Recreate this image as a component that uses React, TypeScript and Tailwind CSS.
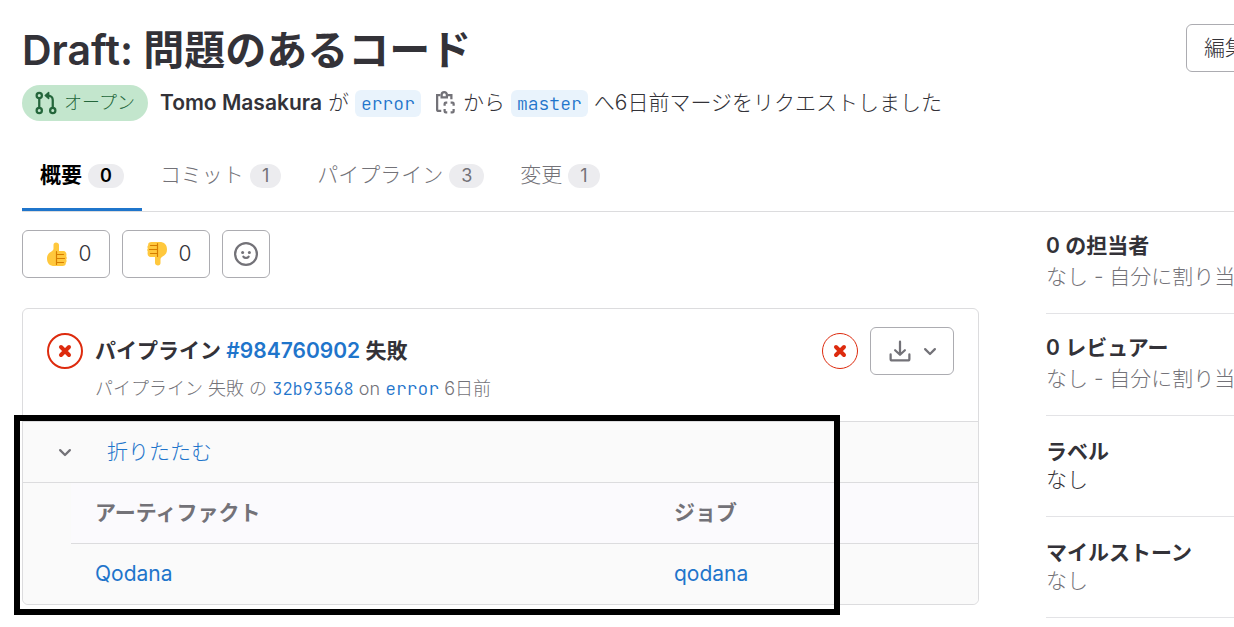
import type {ReactNode} from "react"

const Chevron = () => (
  <svg width="24" height="24" viewBox="0 0 16 16" fill="none" stroke="currentColor" strokeWidth="1.5" strokeLinecap="round" strokeLinejoin="round" aria-hidden="true">
    <path d="M4.75 6.75 8 10l3.25-3.25" />
  </svg>
)

const MergeIcon = () => (
  <svg width="24" height="24" viewBox="0 0 16 16" fill="none" stroke="currentColor" strokeWidth="1.5" aria-hidden="true">
    <circle cx="3.5" cy="3" r="1.75" />
    <circle cx="3.5" cy="13" r="1.75" />
    <circle cx="12.5" cy="13" r="1.75" />
    <path d="M3.5 4.75v6.5M12.5 11.25V6a3 3 0 0 0-3-3H8.5" />
    <path d="M9.75 1 7.5 3l2.25 2z" fill="currentColor" strokeLinejoin="round" strokeWidth="1" />
  </svg>
)

const CopyIcon = () => (
  <svg width="24" height="24" viewBox="0 0 16 16" fill="none" stroke="currentColor" strokeWidth="1.5" aria-hidden="true">
    <path d="M5 2.75H2.75v9.500a1 1 0 0 0 1 1H5.500M10 2.75h2.25V5.500" />
    <path d="M5.75 4.25V2.500a1.75 1.75 0 0 1 3.500 0v1.75z" />
    <path d="M7.750 9.750V8.500q0-.75.75-.75H9.500M11.750 7.750h1.250q.75 0 .75.75V9.750M13.750 12v1.500q0 .75-.75.75h-1.250M9.500 14.250H8.500q-.75 0-.75-.75V12" />
  </svg>
)

const SmileyIcon = () => (
  <svg width="24" height="24" viewBox="0 0 16 16" fill="none" stroke="currentColor" strokeWidth="1.5" strokeLinecap="round" aria-hidden="true">
    <circle cx="8" cy="8" r="7.25" />
    <circle cx="5.75" cy="7" r="1" fill="currentColor" stroke="none" />
    <circle cx="10.25" cy="7" r="1" fill="currentColor" stroke="none" />
    <path d="M6.25 9.75c.8 1.2 2.7 1.2 3.5 0" />
  </svg>
)

const DownloadIcon = () => (
  <svg width="24" height="24" viewBox="0 0 16 16" fill="none" stroke="currentColor" strokeWidth="1.5" strokeLinecap="round" strokeLinejoin="round" aria-hidden="true">
    <path d="M8 1.75v8.5M4.75 7.5 8 10.5l3.25-3M1.75 10.25v3c0 .55.45 1 1 1h10.5c.55 0 1-.45 1-1v-3" />
  </svg>
)

const FailedIcon = ({border}: {border: string}) => (
  <span className={`flex size-9 shrink-0 items-center justify-center rounded-full text-[#dd2b0e] ${border}`}>
    <svg width="14" height="14" viewBox="0 0 14 14" fill="none" stroke="currentColor" strokeWidth="4" strokeLinecap="round" aria-label="失敗">
      <path d="m3 3 8 8M11 3l-8 8" />
    </svg>
  </span>
)

const Thumb = ({down = false}: {down?: boolean}) => (
  <svg width="24" height="24" viewBox="0 0 24 24" aria-hidden="true" className={down ? "rotate-180" : ""}>
    <path
      fill="#ffc83d"
      d="M11 .5c-1.600 0-2.500 1-2.500 2.500V6.500c0 1.500-.9 2.200-2.400 3.200C3.500 11.200 2 13 2 16.500c0 5 2.700 7.500 7.500 7.500h8c2.500 0 3.500-1.300 3.300-3.200.9-.9 1-2.200.4-3.200.8-1 .8-2.300 0-3.300.8-2.300-.2-5.300-2.700-5.300h-4.500V3C14 1.500 12.600.5 11 .5Z"
    />
    <path d="M11.500 22.500V9.500M11.500 12.500h7M11.500 16.500h8M11.500 20.500h7" fill="none" stroke="#d67d00" strokeWidth="1.200" strokeLinecap="round" />
  </svg>
)

const Branch = ({name}: {name: string}) => (
  <a href="#" className="rounded-md bg-[#e9f3fc] px-1.5 font-['JetBrains_Mono','Liberation_Mono',monospace] text-lg leading-[27px] text-[#1f75cb]">
    {name}
  </a>
)

const tabs = [
  {label: "概要", count: 0},
  {label: "コミット", count: 1},
  {label: "パイプライン", count: 3},
  {label: "変更", count: 1},
]

const Tabs = () => (
  <nav className="mt-5 flex border-b border-[#dcdcde]">
    {tabs.map((tab, i) => (
      <a
        key={tab.label}
        href="#"
        className={`flex h-[70px] items-center gap-1.5 px-[18px] ${
          i === 0 ? "-mb-px border-b-3 border-[#1f75cb] font-semibold text-black" : "pb-0.5 font-light text-[#737278]"
        }`}
      >
        {tab.label}
        <span className={`mt-0.5 rounded-full bg-[#ececef] px-3 text-lg leading-6 ${i === 0 ? "" : "font-normal"}`}>{tab.count}</span>
      </a>
    ))}
  </nav>
)

const SideBlock = ({title, people = false, children}: {title: string; people?: boolean; children: ReactNode}) => (
  <section className={`border-b border-[#e3e3e6] pb-[22px] leading-7 whitespace-nowrap ${people ? "pt-5" : "pt-[22px]"}`}>
    <h2 className="font-semibold">{title}</h2>
    <div className={`font-light ${people ? "mt-[3px]" : ""}`}>{children}</div>
  </section>
)

const App = () => {
  return (
    <div className="overflow-hidden bg-white pt-6 pl-[22px] font-['Inter','Noto_Sans_CJK_JP',sans-serif] text-[21px] leading-[30px] text-[#333238]">
      <header>
        <div className="flex items-start justify-between">
          <h1 className="text-[41px] leading-[52px] font-semibold">Draft: 問題のあるコード</h1>
          <div className="w-12 shrink-0">
            <button className="h-12 rounded-md border border-[#acacb1] px-[17px] font-light whitespace-nowrap">編集</button>
          </div>
        </div>
        <div className="mt-[9px] flex items-center whitespace-nowrap">
          <span className="mr-3 flex h-9 items-center gap-1.5 rounded-full bg-[#c3e6cd] pr-[13px] pl-3 text-lg font-light text-[#24663b]">
            <MergeIcon />
            オープン
          </span>
          <div className="flex items-center gap-1.5 font-light">
            <a href="#" className="font-semibold">
              Tomo Masakura
            </a>
            が
            <Branch name="error" />
            <button aria-label="ブランチ名をコピー" className="ml-1.5 text-[#737278]">
              <CopyIcon />
            </button>
            から
            <Branch name="master" />
            <span>へ6日前マージをリクエストしました</span>
          </div>
        </div>
      </header>

      <Tabs />

      <div className="flex">
        <main className="w-[957px] shrink-0 pt-[18px]">
          <div className="flex gap-3 font-light">
            <button className="flex h-12 w-[88px] items-center justify-center gap-2.5 rounded-md border border-[#acacb1] pl-1">
              <Thumb />0
            </button>
            <button className="flex h-12 w-[88px] items-center justify-center gap-2.5 rounded-md border border-[#acacb1] pl-1">
              <Thumb down />0
            </button>
            <button aria-label="リアクションを追加" className="flex size-12 items-center justify-center rounded-md border border-[#acacb1] text-[#737278]">
              <SmileyIcon />
            </button>
          </div>

          <div className="relative mt-[30px] rounded-md border border-[#dcdcde]">
            <div className="flex h-28 items-start px-6 pt-[18px] whitespace-nowrap">
              <div className="mt-1.5 mr-3">
                <FailedIcon border="border-2 border-[#dd2b0e]" />
              </div>
              <div className="flex-1 pt-[9px]">
                <p className="font-semibold">
                  パイプライン{" "}
                  <a href="#" className="text-[#1f75cb]">
                    #984760902
                  </a>{" "}
                  失敗
                </p>
                <p className="mt-[9px] text-lg font-light text-[#737278]">
                  パイプライン 失敗 の{" "}
                  <a href="#" className="font-['JetBrains_Mono','Liberation_Mono',monospace] text-[17px] text-[#1f75cb]">
                    32b93568
                  </a>{" "}
                  on{" "}
                  <a href="#" className="font-['JetBrains_Mono','Liberation_Mono',monospace] text-[#1f75cb]">
                    error
                  </a>{" "}
                  6日前
                </p>
              </div>
              <div className="flex items-center gap-3">
                <FailedIcon border="border border-[#dd2b0e]" />
                <button aria-label="アーティファクトをダウンロード" className="flex h-12 w-[84px] items-center justify-center gap-1.5 rounded-md border border-[#acacb1] pl-1.5 text-[#737278]">
                  <DownloadIcon />
                  <Chevron />
                </button>
              </div>
            </div>

            <div className="rounded-b-md bg-[#fafafa]">
              <div className="flex h-[62px] items-center border-y border-[#dcdcde] pl-[30px] text-[#737278]">
                <Chevron />
                <button className="ml-[30px] font-light text-[#1f75cb]">折りたたむ</button>
              </div>
              <div className="pl-12">
                <table className="w-full table-fixed text-left">
                  <thead className="bg-[#fbfafd] text-[#737278]">
                    <tr className="h-[60px] border-b border-[#dcdcde]">
                      <th className="w-[579px] pl-6 font-semibold">アーティファクト</th>
                      <th className="pl-6 font-semibold">ジョブ</th>
                    </tr>
                  </thead>
                  <tbody className="text-[#1f75cb]">
                    <tr className="h-[61px]">
                      <td className="pl-6">
                        <a href="#">Qodana</a>
                      </td>
                      <td className="pl-6">
                        <a href="#">qodana</a>
                      </td>
                    </tr>
                  </tbody>
                </table>
              </div>
            </div>
            <div className="pointer-events-none absolute top-[106px] -left-[9px] h-[200px] w-[826px] border-6 border-black" />
          </div>
        </main>

        <aside className="ml-[67px] flex min-w-0 flex-1 flex-col">
          <SideBlock title="0 の担当者" people>
            <span className="text-[#737278]">なし - 自分に割り当てる</span>
          </SideBlock>
          <SideBlock title="0 レビュアー" people>
            <span className="text-[#737278]">なし - 自分に割り当てる</span>
          </SideBlock>
          <SideBlock title="ラベル">なし</SideBlock>
          <SideBlock title="マイルストーン">
            <span className="text-[#737278]">なし</span>
          </SideBlock>
        </aside>
      </div>
    </div>
  )
}

export default App
